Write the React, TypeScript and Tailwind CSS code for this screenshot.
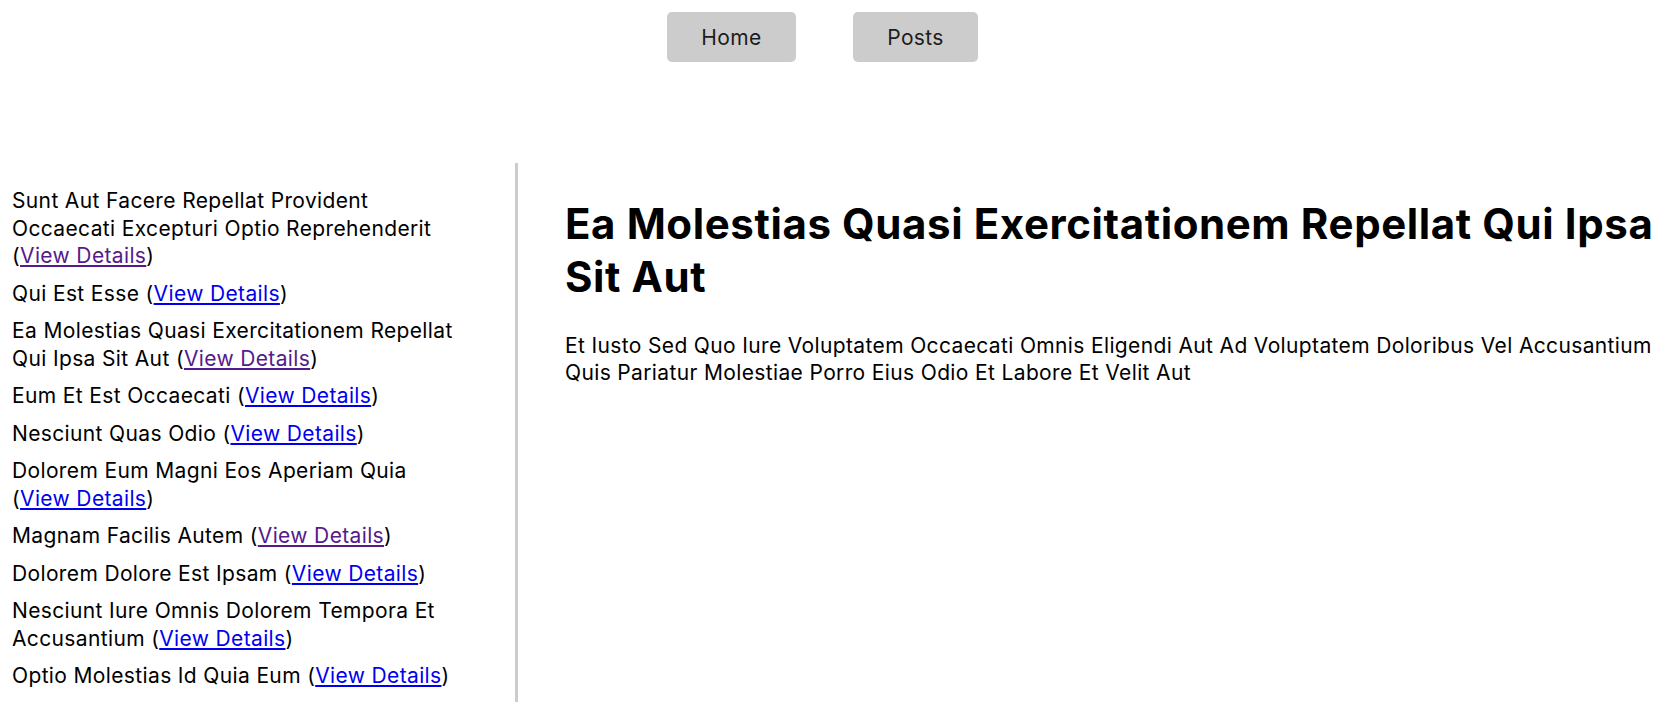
const posts = [
  { title: 'Sunt Aut Facere Repellat Provident Occaecati Excepturi Optio Reprehenderit', visited: true },
  { title: 'Qui Est Esse', visited: false },
  { title: 'Ea Molestias Quasi Exercitationem Repellat Qui Ipsa Sit Aut', visited: true },
  { title: 'Eum Et Est Occaecati', visited: false },
  { title: 'Nesciunt Quas Odio', visited: false },
  { title: 'Dolorem Eum Magni Eos Aperiam Quia', visited: false },
  { title: 'Magnam Facilis Autem', visited: true },
  { title: 'Dolorem Dolore Est Ipsam', visited: false },
  { title: 'Nesciunt Iure Omnis Dolorem Tempora Et Accusantium', visited: false },
  { title: 'Optio Molestias Id Quia Eum', visited: false },
];

export default function App() {
  return (
    <div className="flex h-screen flex-col overflow-hidden bg-white font-['Inter',sans-serif] text-[21px] leading-[27px] tracking-[0.36px] text-black">
      <nav className="flex justify-center gap-[57px] pt-3 pr-5">
        <button className="h-[50px] w-[129px] rounded-[5px] bg-[#cccccc] text-[#1c1c1c]">Home</button>
        <button className="h-[50px] w-[125px] rounded-[5px] bg-[#cccccc] text-[#1c1c1c]">Posts</button>
      </nav>

      <div className="mt-[101px] flex flex-1">
        <aside className="w-[518px] shrink-0 border-r-[3px] border-[#cccccc] pt-6 pr-12 pl-3">
          <ul className="leading-[27.5px]">
            {posts.map((p) => (
              <li key={p.title} className="mb-[10px]">
                {p.title} (
                <a href="#" className={p.visited ? 'text-[#551a8b] underline' : 'text-[#0000ee] underline'}>
                  View Details
                </a>
                )
              </li>
            ))}
          </ul>
        </aside>

        <main className="flex-1 pt-[34px] pr-2 pl-[47px]">
          <h1 className="text-[42px] leading-[53px] font-bold tracking-[0.6px]">
            Ea Molestias Quasi Exercitationem Repellat Qui Ipsa Sit Aut
          </h1>
          <p className="mt-[29px]">
            Et Iusto Sed Quo Iure Voluptatem Occaecati Omnis Eligendi Aut Ad Voluptatem Doloribus Vel Accusantium
            Quis Pariatur Molestiae Porro Eius Odio Et Labore Et Velit Aut
          </p>
        </main>
      </div>
    </div>
  );
}
